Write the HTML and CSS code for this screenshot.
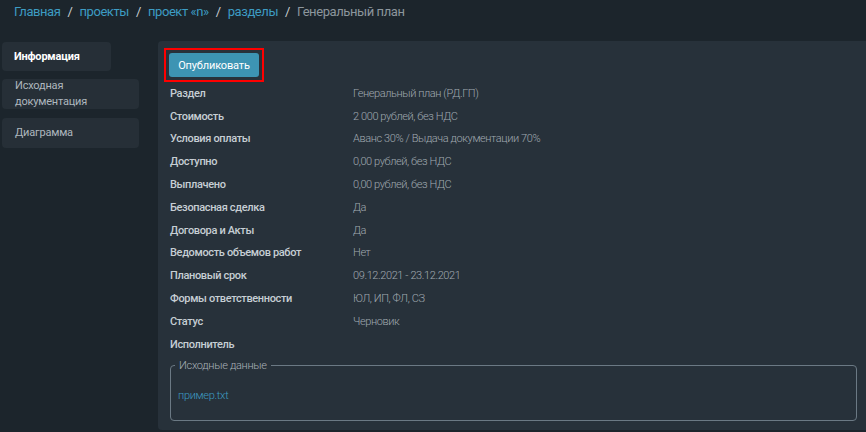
FILE: index.html
```html
<!DOCTYPE html>
<html lang="ru">
<head>
<meta charset="utf-8">
<link rel="stylesheet" href="styles.css">
</head>
<body>
<nav class="crumbs">
  <a href="#">Главная</a><span class="sep">/</span>
  <a href="#">проекты</a><span class="sep">/</span>
  <a href="#">проект «n»</a><span class="sep">/</span>
  <a href="#">разделы</a><span class="sep">/</span>
  <span class="current">Генеральный план</span>
</nav>
<div class="layout">
  <aside class="side">
    <div class="side-item active">Информация</div>
    <div class="side-item wide">Исходная документация</div>
    <div class="side-item wide">Диаграмма</div>
  </aside>
  <main class="panel">
    <div class="actions"><span class="highlight"><button class="btn">Опубликовать</button></span></div>
    <div class="rows">
      <div class="row"><span class="lbl">Раздел</span><span class="val">Генеральный план (РД.ГП)</span></div>
      <div class="row"><span class="lbl">Стоимость</span><span class="val">2 000 рублей, без НДС</span></div>
      <div class="row"><span class="lbl">Условия оплаты</span><span class="val">Аванс 30% / Выдача документации 70%</span></div>
      <div class="row"><span class="lbl">Доступно</span><span class="val">0,00 рублей, без НДС</span></div>
      <div class="row"><span class="lbl">Выплачено</span><span class="val">0,00 рублей, без НДС</span></div>
      <div class="row"><span class="lbl">Безопасная сделка</span><span class="val">Да</span></div>
      <div class="row"><span class="lbl">Договора и Акты</span><span class="val">Да</span></div>
      <div class="row"><span class="lbl">Ведомость объемов работ</span><span class="val">Нет</span></div>
      <div class="row"><span class="lbl">Плановый срок</span><span class="val">09.12.2021 - 23.12.2021</span></div>
      <div class="row"><span class="lbl">Формы ответственности</span><span class="val">ЮЛ, ИП, ФЛ, СЗ</span></div>
      <div class="row"><span class="lbl">Статус</span><span class="val">Черновик</span></div>
      <div class="row"><span class="lbl">Исполнитель</span><span class="val"></span></div>
    </div>
    <fieldset class="files">
      <legend>Исходные данные</legend>
      <a href="#" class="file">пример.txt</a>
    </fieldset>
  </main>
</div>
</body>
</html>
```
FILE: styles.css
```css
html, body {
  margin: 0;
  padding: 0;
  background: #1c252c;
  font-family: Roboto, "Noto Sans", sans-serif;
  height: 100%;
  overflow: hidden;
}
a { text-decoration: none; }

.crumbs {
  height: 40px;
  box-sizing: border-box;
  padding: 2px 14px 0;
  font-size: 13px;
  letter-spacing: -0.42px;
  line-height: 20px;
  color: #8c969d;
  display: flex;
}
.crumbs a { color: #3d9cc3; }
.crumbs .sep { color: #c9ced2; margin: 0 7px; }
.crumbs .current { color: #8c969d; }

.layout {
  display: flex;
  align-items: flex-start;
  padding-top: 1px;
}
.side {
  width: 137px;
  margin-left: 2px;
  margin-top: 1px;
  display: flex;
  flex-direction: column;
  gap: 8px;
  flex-shrink: 0;
}
.side-item {
  background: #262f37;
  border-radius: 4px;
  height: 30px;
  box-sizing: border-box;
  padding: 0 12px 0 13px;
  display: flex;
  align-items: center;
  font-size: 11px;
  letter-spacing: -0.2px;
  line-height: 16px;
  color: #aeb7be;
}
.side-item.active {
  width: 109px;
  height: 29px;
  padding-left: 12px;
  color: #ffffff;
  font-weight: 700;
}
.side-item.wide + .side-item.wide { margin-top: 1px; }

.panel {
  flex: 1;
  margin-left: 19px;
  background: #27313a;
  border-radius: 4px 0 0 4px;
  padding: 7px 9px 9px 6px;
  height: 389px;
  box-sizing: border-box;
}
.actions { display: flex; }
.highlight {
  display: flex;
  border: 2px solid #ff0000;
  padding: 3px;
}
.btn {
  width: 90px;
  height: 24px;
  background: #3d94b3;
  color: #ffffff;
  border: 0;
  border-radius: 3px;
  font-family: Roboto, sans-serif;
  font-size: 11px;
  letter-spacing: -0.15px;
  padding: 0;
}
.rows { margin-top: 0; padding-left: 6px; }
.row {
  display: flex;
  height: 22.8px;
  align-items: center;
  font-size: 11px;
  letter-spacing: -0.35px;
}
.lbl {
  width: 183px;
  flex-shrink: 0;
  color: #c6ced4;
  font-weight: 500;
}
.val {
  color: #a0a9b0;
  font-weight: 300;
  letter-spacing: -0.4px;
}

.files {
  margin: 3px 0 0 6px;
  padding: 15px 7px 16px;
  border: 1px solid #6b7984;
  border-radius: 4px;
}
.files legend {
  font-size: 11px;
  letter-spacing: -0.3px;
  line-height: 14px;
  color: #a9b2b9;
  font-weight: 300;
  padding: 0 4px;
  margin-left: -3px;
}
.file {
  display: block;
  font-size: 11px;
  letter-spacing: -0.3px;
  line-height: 16px;
  color: #3d9cc3;
  font-weight: 300;
}
```
